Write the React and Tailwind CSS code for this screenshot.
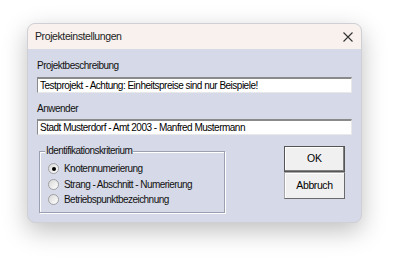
import React from "react";

const font = { fontFamily: '"Liberation Sans", Arial, sans-serif' };

function Radio({ checked, label }) {
  return (
    <div className="flex items-center h-[15.5px]">
      <span className="w-[11px] h-[11px] rounded-full border border-[#a0a0a0] bg-gradient-to-br from-[#d8d8d8] to-white flex items-center justify-center">
        {checked && <span className="w-[4px] h-[4px] rounded-full bg-black"></span>}
      </span>
      <span className="ml-[5px] text-[10px] text-[#111] tracking-[-0.55px]">{label}</span>
    </div>
  );
}

export default function App() {
  return (
    <div className="w-[400px] h-[264px] bg-white pl-[27px] pt-[23px]" style={font}>
      <div className="w-[335px] rounded-[8px] overflow-hidden border border-[#cfcfd4] shadow-[0_8px_24px_rgba(0,0,0,0.25)] bg-[#d5d9e8]">
        {/* Title bar */}
        <div className="h-[25px] bg-[#f8f1ee] flex items-center justify-between pl-[7px] pr-[6px]">
          <span className="text-[10.5px] text-[#222] tracking-[-0.4px]">Projekteinstellungen</span>
          <svg width="12" height="12" viewBox="0 0 12 12" className="mr-[1px]">
            <path d="M1.5 1.5 L10.5 10.5 M10.5 1.5 L1.5 10.5" stroke="#333" strokeWidth="1.1" />
          </svg>
        </div>

        {/* Body */}
        <div className="px-[9px] pb-[9px]">
          <div className="mt-[10px] h-[14px] text-[10px] text-[#111] tracking-[-0.5px] leading-[14px]">Projektbeschreibung</div>
          <div className="mt-[4px] h-[16px] bg-white border-t-2 border-l border-t-[#8a8a8a] border-l-[#8a8a8a] border-b border-r border-b-[#e8e8e8] border-r-[#e8e8e8] flex items-center px-[2px]">
            <span className="text-[10px] text-black tracking-[-0.5px] leading-none">Testprojekt - Achtung: Einheitspreise sind nur Beispiele!</span>
          </div>
          <div className="mt-[9px] h-[14px] text-[10px] text-[#111] tracking-[-0.5px] leading-[14px]">Anwender</div>
          <div className="mt-[3px] h-[16px] bg-white border-t-2 border-l border-t-[#8a8a8a] border-l-[#8a8a8a] border-b border-r border-b-[#e8e8e8] border-r-[#e8e8e8] flex items-center px-[2px]">
            <span className="text-[10px] text-black tracking-[-0.5px] leading-none">Stadt Musterdorf - Amt 2003 - Manfred Mustermann</span>
          </div>

          <div className="mt-[11px] flex justify-between">
            {/* Group box */}
            <div className="ml-[2px] mt-[5px] w-[186px] h-[62px] border border-[#9aa0b0] shadow-[inset_1px_1px_0_white,1px_1px_0_white] relative pl-[8px] pt-[9px]">
              <span className="absolute left-[5px] top-[-8px] bg-[#d5d9e8] px-[1px] text-[10px] text-[#111] tracking-[-0.55px] leading-[14px]">Identifikationskriterium</span>
              <Radio checked label="Knotennumerierung" />
              <Radio label="Strang - Abschnitt - Numerierung" />
              <Radio label="Betriebspunktbezeichnung" />
            </div>

            {/* Buttons */}
            <div className="mr-[7px] flex flex-col w-[61px]">
              <button className="h-[26px] bg-[#f0f0f0] border border-[#555] shadow-[inset_-1px_-1px_0_#808080,inset_1px_1px_0_white] text-[10.5px] text-black">OK</button>
              <button className="h-[27px] bg-[#f0f0f0] border border-[#a8a8a8] border-b-[#6a6a6a] border-r-[#6a6a6a] shadow-[inset_1px_1px_0_white] text-[10.5px] text-black tracking-[-0.4px]">Abbruch</button>
            </div>
          </div>
        </div>
      </div>
    </div>
  );
}
